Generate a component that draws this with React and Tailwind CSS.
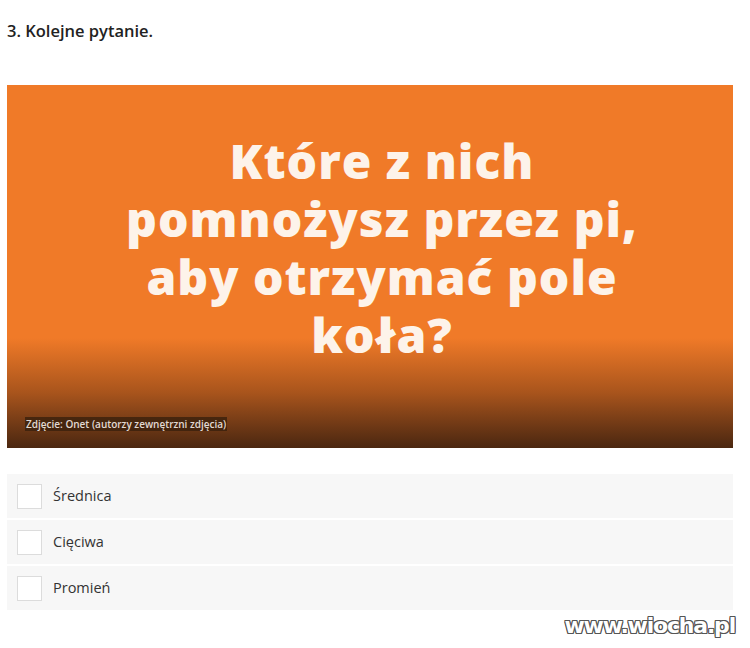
export default function App() {
  const options = ["Średnica", "Cięciwa", "Promień"];

  return (
    <div className="w-[750px] h-[648px] bg-white relative overflow-hidden" style={{ fontFamily: '"Open Sans", sans-serif' }}>
      <div className="px-[7px] pt-[20px]">
        <h3 className="text-[16.5px] font-semibold text-[#222] leading-[22px]">3. Kolejne pytanie.</h3>

        {/* question image */}
        <div className="mt-[43px] w-[726px] h-[363px] bg-[#f07a28] relative flex flex-col">
          <div className="absolute left-0 right-0 bottom-0 h-[110px] bg-gradient-to-b from-[#f07a28]/0 via-[#a8541c] to-[#4b2710]" />
          <div className="relative flex-1 flex items-start justify-center pt-[47px] pl-[24px]">
            <p
              className="text-center text-[#fdf3ea] text-[48px] leading-[58px] tracking-[1px]"
              style={{ fontFamily: '"Open Sans", sans-serif', fontWeight: 800 }}
            >
              Które z nich
              <br />
              pomnożysz przez pi,
              <br />
              aby otrzymać pole
              <br />
              koła?
            </p>
          </div>
          <span className="absolute left-[18px] bottom-[17px] bg-[#3a200c]/80 text-[#e2d9d2] text-[10px] font-semibold leading-[14px] px-[1px]">
            Zdjęcie: Onet (autorzy zewnętrzni zdjęcia)
          </span>
        </div>

        {/* answers */}
        <div className="mt-[26px] w-[726px] flex flex-col gap-[2px]">
          {options.map((o) => (
            <label key={o} className="h-[44px] bg-[#f7f7f7] flex items-center gap-[11px] px-[10px]">
              <span className="w-[25px] h-[25px] bg-white border border-[#dcdcdc]" />
              <span className="text-[14.5px] text-[#333]">{o}</span>
            </label>
          ))}
        </div>
      </div>

      <div
        className="absolute right-[15px] bottom-[9px] text-[22px] leading-[26px] font-bold text-white tracking-[-1.2px]"
        style={{
          fontFamily: '"DejaVu Sans", sans-serif',
          textShadow:
            "1px 0 0 #555, -1px 0 0 #555, 0 1px 0 #555, 0 -1px 0 #555, 1px 1px 0 #555, -1px -1px 0 #555, 1px -1px 0 #555, -1px 1px 0 #555",
        }}
      >
        www.wiocha.pl
      </div>
    </div>
  );
}
